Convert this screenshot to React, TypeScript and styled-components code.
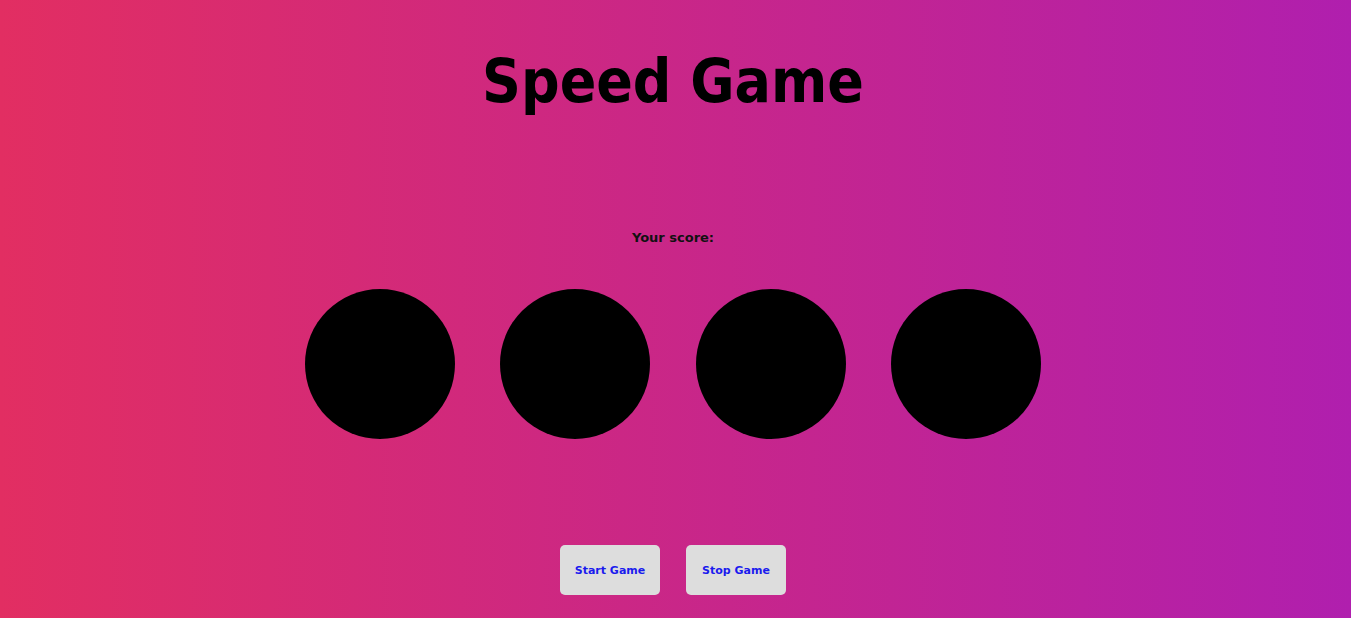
import React from "react";
import styled, { createGlobalStyle } from "styled-components";

const Global = createGlobalStyle`
  html, body { margin: 0; padding: 0; }
  body {
    background: linear-gradient(to right, #e22e62, #b01fae);
    min-height: 618px;
    font-family: "DejaVu Sans", Verdana, sans-serif;
  }
`;

const Page = styled.div`
  display: flex;
  flex-direction: column;
  align-items: center;
  min-height: 618px;
  padding-right: 5px;
`;

const Title = styled.h1`
  margin: 38px 0 0;
  font-family: "DejaVu Sans Condensed", "DejaVu Sans", sans-serif;
  font-stretch: condensed;
  font-size: 60px;
  font-weight: bold;
  line-height: 86px;
  color: #000;
`;

const Score = styled.p`
  margin: 105px 0 0;
  font-size: 13px;
  font-weight: bold;
  line-height: 18px;
  color: #111;
`;

const Circles = styled.div`
  display: flex;
  gap: 45.5px;
  margin-top: 42px;
`;

const Circle = styled.div`
  width: 150px;
  height: 150px;
  border-radius: 50%;
  background: #000;
`;

const Buttons = styled.div`
  display: flex;
  gap: 26px;
  margin-top: 106px;
`;

const Button = styled.button`
  width: 100px;
  height: 50px;
  border: none;
  border-radius: 5px;
  background: #dddddd;
  color: #1a1aee;
  font-family: "DejaVu Sans", Verdana, sans-serif;
  font-size: 11px;
  font-weight: bold;
  cursor: pointer;
`;

export default function App() {
  return (
    <Page>
      <Global />
      <Title>Speed Game</Title>
      <Score>Your score: </Score>
      <Circles>
        {[0, 1, 2, 3].map((i) => (
          <Circle key={i} />
        ))}
      </Circles>
      <Buttons>
        <Button>Start Game</Button>
        <Button>Stop Game</Button>
      </Buttons>
    </Page>
  );
}
